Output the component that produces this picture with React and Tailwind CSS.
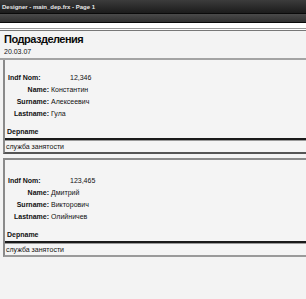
import React from "react";

const records = [
  {
    id: 1,
    nom: "12,346",
    name: "Константин",
    surname: "Алексеевич",
    lastname: "Гула",
    dep: "служба занятости",
  },
  {
    id: 2,
    nom: "123,465",
    name: "Дмитрий",
    surname: "Викторович",
    lastname: "Олийничев",
    dep: "служба занятости",
  },
];

const Field = ({ label, value }) => (
  <div className="flex h-[12px] items-center">
    <span className="w-[44px] text-right font-bold">{label}</span>
    <span className="ml-[2px]">{value}</span>
  </div>
);

const RecordBand = ({ item, first }) => (
  <div
    className={
      first
        ? "ml-[3px] border-l-2 border-b-2 border-l-[#8a8a8a] border-b-[#555] bg-[#f4f4f4]"
        : "ml-[3px] mt-[4px] border-l-2 border-t-2 border-b-2 border-l-[#8a8a8a] border-t-[#8a8a8a] border-b-[#9a9a9a] bg-[#f4f4f4]"
    }
  >
    <div className={first ? "pt-[11px]" : "pt-[14px]"}>
      <div className="flex h-[12px] items-center">
        <span className="ml-[3px] w-[62px] font-bold">Indf Nom:</span>
        <span className="w-[21px] text-right">{item.nom}</span>
      </div>
      <Field label="Name:" value={item.name} />
      <Field label="Surname:" value={item.surname} />
      <Field label="Lastname:" value={item.lastname} />
      <div className="mt-[6px] flex h-[12px] items-center pl-[2px] font-bold">
        Depname
      </div>
    </div>
    <div className="mt-[1px] h-[2px] bg-[#1a1a1a]" />
    <div className="h-[1px] bg-[#9a9a9a]" />
    <div className="flex h-[11px] items-center pl-[1px]">{item.dep}</div>
  </div>
);

export default function App() {
  return (
    <div
      className="h-[299px] w-[306px] overflow-hidden bg-[#f3f3f3] text-[7px] leading-none text-[#111]"
      style={{ fontFamily: '"Liberation Sans", Arial, sans-serif' }}
    >
      <div className="flex h-[13px] items-center bg-gradient-to-b from-[#3c3c3c] to-[#1c1c1c] pl-[2px] text-[6px] font-bold text-[#e8e8e8]">
        Designer - main_dep.frx - Page 1
      </div>
      <div className="h-[10px] border-y border-[#0a0a0a] bg-gradient-to-b from-[#4a4a4a] to-[#303030]" />
      <div className="h-[5px] bg-white" />
      <div className="h-[1px] bg-[#9a9a9a]" />
      <div className="h-[1px] bg-white" />
      <div className="h-[1px] bg-[#777]" />
      <div className="h-[27px] pl-[4px]">
        <div className="pt-[2px] text-[11px] font-bold leading-[12px] tracking-[-0.5px] text-[#0a0a0a]">
          Подразделения
        </div>
        <div className="mt-[3px] text-[7px]">20.03.07</div>
      </div>
      <div className="h-[2px] bg-[#a3a3a3]" />
      {records.map((item, i) => (
        <RecordBand key={item.id} item={item} first={i === 0} />
      ))}
    </div>
  );
}
